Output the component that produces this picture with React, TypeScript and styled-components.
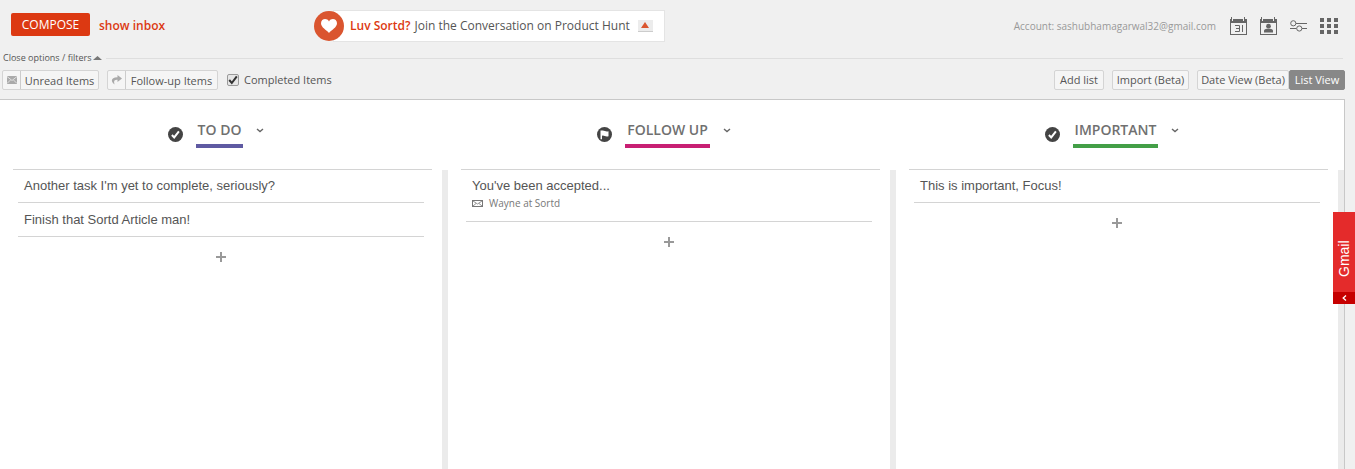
import React from 'react';
import styled, { createGlobalStyle } from 'styled-components';

const ui = `'Segoe UI', 'Open Sans', 'Noto Sans', sans-serif`;

const GlobalStyle = createGlobalStyle`
  *, *::before, *::after { box-sizing: border-box; }
  body {
    margin: 0;
    background: #f0f0f0;
    color: #555;
    font-family: ${ui};
    font-size: 11px;
    line-height: 16px;
  }
  button, input { font: inherit; color: inherit; }
  button { padding: 0; border: 0; background: none; cursor: pointer; white-space: nowrap; }
  svg { display: block; flex: none; }
`;

const Page = styled.div`
  display: flex;
  flex-direction: column;
  min-height: 100vh;
`;

const TopBar = styled.header`
  display: flex;
  align-items: center;
  height: 51px;
  padding: 0 17px 0 11px;
`;

const MailActions = styled.div`
  display: flex;
  align-items: center;
  gap: 9px;
  width: 303px;
`;

const ComposeButton = styled.button`
  width: 79px;
  height: 23px;
  margin-bottom: 2px;
  border-radius: 2px;
  background: #dc3912;
  color: #fff;
  font-size: 12px;
`;

const InboxLink = styled.a`
  color: #dc3912;
  font-size: 12px;
  font-weight: 600;
  text-decoration: none;
`;

const Banner = styled.a`
  display: flex;
  align-items: center;
  height: 32px;
  color: #555;
  font-size: 12px;
  text-decoration: none;
  white-space: nowrap;
`;

const BannerBody = styled.span`
  display: flex;
  align-items: center;
  gap: 4px;
  height: 32px;
  margin-left: -11px;
  padding: 0 11px 0 16px;
  border: 1px solid #e4e4e4;
  background: #fff;
`;

const HeartBadge = styled.span`
  display: grid;
  place-items: center;
  z-index: 1;
  width: 30px;
  height: 30px;
  border-radius: 50%;
  background: #da552f;
`;

const BannerLead = styled.strong`
  color: #dc3912;
  font-weight: 600;
`;

const Upvote = styled.span`
  display: grid;
  place-items: center;
  width: 15px;
  height: 12px;
  margin-left: 4px;
  border-bottom: 1px solid #ccc;
  background: #ececec;
`;

const Account = styled.span`
  margin-left: auto;
  color: #999;
  font-size: 10px;
`;

const ToolIcons = styled.nav`
  display: flex;
  align-items: center;
  gap: 12px;
  margin-left: 14px;
`;

const ToolButton = styled.button`
  width: 18px;
`;

const OptionsLine = styled.div`
  display: flex;
  align-items: center;
  gap: 4px;
  height: 14px;
  padding: 0 12px 0 3px;
`;

const OptionsToggle = styled.button`
  display: flex;
  align-items: center;
  gap: 2px;
  height: 14px;
  font-size: 9px;
`;

const Divider = styled.hr`
  flex: 1;
  height: 1px;
  margin: 0;
  border: 0;
  background: #dedede;
`;

const FilterBar = styled.div`
  display: flex;
  align-items: center;
  justify-content: space-between;
  padding: 5px 10px 9px 2px;
`;

const Group = styled.div<{ $gap: number }>`
  display: flex;
  align-items: center;
  gap: ${({ $gap }) => $gap}px;
`;

const FilterButton = styled.button<{ $width: number }>`
  display: flex;
  width: ${({ $width }) => $width}px;
  height: 20px;
  border: 1px solid #d4d4d4;
  border-radius: 2px;
  background: #f5f5f5;
`;

const FilterIcon = styled.span`
  display: grid;
  place-items: center;
  width: 18px;
  height: 18px;
  border-right: 1px solid #ccc;
`;

const FilterText = styled.span`
  flex: 1;
  line-height: 20px;
`;

const CheckLabel = styled.label`
  display: flex;
  align-items: center;
  gap: 5px;
  margin-left: 1px;
`;

const CheckBox = styled.input`
  appearance: none;
  width: 12px;
  height: 12px;
  margin: 0;
  border: 1px solid #9a9a9a;
  border-radius: 2px;
  background: #e6e6e6;
`;

const CheckFrame = styled.span`
  display: grid;
  > * { grid-area: 1 / 1; place-self: center; pointer-events: none; }
  > input { pointer-events: auto; }
  > input:not(:checked) + svg { visibility: hidden; }
`;

const PlainButton = styled.button<{ $width: number; $active?: boolean }>`
  width: ${({ $width }) => $width}px;
  height: 20px;
  border: 1px solid ${({ $active }) => ($active ? '#888' : '#d4d4d4')};
  border-radius: 2px;
  background: ${({ $active }) => ($active ? '#888' : '#f5f5f5')};
  color: ${({ $active }) => ($active ? '#fff' : '#555')};
`;

const Board = styled.main`
  flex: 1;
  display: grid;
  grid-template-columns: repeat(3, minmax(0, 1fr));
  margin-right: 10px;
  border: 1px solid #c8c8c8;
  border-width: 1px 1px 0 0;
  background: #fff;
`;

const Column = styled.section`
  display: flex;
  flex-direction: column;
`;

const ColumnHead = styled.div`
  display: flex;
  align-items: center;
  justify-content: center;
  gap: 13px;
  height: 70px;
  margin: 0 16px 0 13px;
  padding: 0 13px 1px 0;
  border-bottom: 1px solid #d4d4d4;
`;

const ColumnTitle = styled.h2<{ $color: string }>`
  margin: 0;
  padding: 0 2px 4px;
  border-bottom: 4px solid ${({ $color }) => $color};
  color: #707070;
  font-size: 14px;
  line-height: 20px;
  font-weight: 600;
`;

const MenuButton = styled.button`
  margin-bottom: 8px;
`;

const ColumnBody = styled.div`
  flex: 1;
  padding: 0 18px;
  border-right: 6px solid #ebebeb;
`;

const TaskList = styled.ul`
  margin: -1px 0 0;
  padding: 0;
  list-style: none;
`;

const Task = styled.li`
  padding: 8px 6px;
  border-bottom: 1px solid #d4d4d4;
  font-family: Arial, 'Liberation Sans', sans-serif;
  font-size: 13px;
  line-height: 17px;
`;

const Sender = styled.div`
  display: flex;
  align-items: center;
  gap: 6px;
  padding: 2px 0 3px;
  color: #777;
  font-family: ${ui};
  font-size: 10px;
  line-height: 14px;
`;

const AddTask = styled.button`
  display: block;
  margin: 15px auto 0;
`;

const GmailTab = styled.button`
  position: fixed;
  top: 212px;
  right: 0;
  display: flex;
  flex-direction: column;
  width: 22px;
  height: 92px;
  background: #e42b2b;
  color: #fff;
`;

const GmailText = styled.span`
  flex: 1;
  width: 22px;
  padding-top: 15px;
  writing-mode: vertical-rl;
  transform: rotate(180deg);
  text-align: left;
  font-family: Arial, 'Liberation Sans', sans-serif;
  font-size: 14px;
  line-height: 22px;
`;

const GmailArrow = styled.span`
  display: grid;
  place-items: center;
  width: 22px;
  height: 12px;
  background: #c60000;
`;

const CalendarFrame = () => (
  <path d="M0 2h1V0h1v4h1V2h10v2h1V0h1v2h2v16H0zM1 6v11h15V6z" fill="#666" fillRule="evenodd" />
);

const CalendarIcon = () => (
  <svg width="17" height="18" viewBox="0 0 17 18">
    <CalendarFrame />
    <path d="M5 8.500h4.500v6H5M6 11.500h3.500M12.500 8v7" fill="none" stroke="#666" />
  </svg>
);

const ContactsIcon = () => (
  <svg width="17" height="18" viewBox="0 0 17 18">
    <CalendarFrame />
    <circle cx="8.500" cy="9.200" r="2.400" fill="#666" />
    <path d="M4 15.500v-1.500q0-2 3-2.200h3q3 .2 3 2.200v1.500z" fill="#666" />
  </svg>
);

const SettingsIcon = () => (
  <svg width="18" height="12" viewBox="0 0 18 12" fill="none" stroke="#666">
    <path d="M6 3.500h11M0 8.500h6.500M12 8.500h5" />
    <circle cx="3.300" cy="3.300" r="2.600" />
    <circle cx="9.300" cy="8.500" r="2.600" />
  </svg>
);

const AppsIcon = () => (
  <svg width="18" height="16" viewBox="0 0 18 16" fill="#666">
    {[0, 6, 12].map((y) =>
      [0, 7, 14].map((x) => <rect key={`${x}-${y}`} x={x} y={y} width="4" height="4" />),
    )}
  </svg>
);

const CheckCircle = () => (
  <svg width="15" height="15" viewBox="0 0 15 15">
    <circle cx="7.500" cy="7.500" r="7.500" fill="#444" />
    <path d="M3.900 8l2.300 2.400 4.700-6" fill="none" stroke="#fff" strokeWidth="2" />
  </svg>
);

const FlagCircle = () => (
  <svg width="15" height="15" viewBox="0 0 15 15">
    <circle cx="7.500" cy="7.500" r="7.500" fill="#444" />
    <path d="M3.500 3.500h1.200q1.700-.4 3.200.5 1.700.7 3.600.2v5q-2 .6-3.800-.2-1.500-.7-2.700-.3v3.500H3.500z" fill="#fff" />
  </svg>
);

const Triangle = ({ width, height, color }: { width: number; height: number; color: string }) => (
  <svg width={width} height={height} viewBox="0 0 10 6" preserveAspectRatio="none">
    <path d="M5 0l5 6H0z" fill={color} />
  </svg>
);

type ColumnData = {
  title: string;
  color: string;
  icon: React.ReactNode;
  tasks: { text: string; sender?: string }[];
};

const columns: ColumnData[] = [
  {
    title: 'TO DO',
    color: '#5f5aa2',
    icon: <CheckCircle />,
    tasks: [{ text: "Another task I'm yet to complete, seriously?" }, { text: 'Finish that Sortd Article man!' }],
  },
  {
    title: 'FOLLOW UP',
    color: '#c81f73',
    icon: <FlagCircle />,
    tasks: [{ text: "You've been accepted...", sender: 'Wayne at Sortd' }],
  },
  {
    title: 'IMPORTANT',
    color: '#439f47',
    icon: <CheckCircle />,
    tasks: [{ text: 'This is important, Focus!' }],
  },
];

export default function App() {
  return (
    <Page>
      <GlobalStyle />
      <TopBar>
        <MailActions>
          <ComposeButton>COMPOSE</ComposeButton>
          <InboxLink href="#inbox">show inbox</InboxLink>
        </MailActions>
        <Banner href="#product-hunt">
          <HeartBadge>
            <svg width="16" height="14" viewBox="0 0 16 14">
              <path d="M8 14C5.500 11 0 8.500 0 4.300 0-.4 6-1.400 8 2.500 10-1.400 16-.4 16 4.300 16 8.500 10.500 11 8 14z" fill="#fff" />
            </svg>
          </HeartBadge>
          <BannerBody>
            <BannerLead>Luv Sortd?</BannerLead>
            <span>Join the Conversation on Product Hunt</span>
            <Upvote>
              <Triangle width={8} height={6} color="#da552f" />
            </Upvote>
          </BannerBody>
        </Banner>
        <Account>Account: sashubhamagarwal32@gmail.com</Account>
        <ToolIcons>
          <ToolButton aria-label="Calendar"><CalendarIcon /></ToolButton>
          <ToolButton aria-label="Contacts"><ContactsIcon /></ToolButton>
          <ToolButton aria-label="Settings"><SettingsIcon /></ToolButton>
          <ToolButton aria-label="Apps"><AppsIcon /></ToolButton>
        </ToolIcons>
      </TopBar>
      <OptionsLine>
        <OptionsToggle>
          Close options / filters
          <Triangle width={9} height={4} color="#777" />
        </OptionsToggle>
        <Divider />
      </OptionsLine>
      <FilterBar>
        <Group $gap={8}>
          <FilterButton $width={97}>
            <FilterIcon>
              <svg width="10" height="8" viewBox="0 0 10 8">
                <rect width="10" height="8" fill="#aaa" />
                <path d="M0 .5l5 4 5-4M0 7.500L3.500 4M10 7.500L6.500 4" fill="none" stroke="#eee" strokeWidth=".8" />
              </svg>
            </FilterIcon>
            <FilterText>Unread Items</FilterText>
          </FilterButton>
          <FilterButton $width={111}>
            <FilterIcon>
              <svg width="11" height="10" viewBox="0 0 11 10">
                <path d="M6.500 0L11 3.500 6.500 7V4.800C3.500 4.600 2.300 6 3.600 9.500-.6 6.500-.2 2.300 6.500 2.200z" fill="#aaa" />
              </svg>
            </FilterIcon>
            <FilterText>Follow-up Items</FilterText>
          </FilterButton>
          <CheckLabel>
            <CheckFrame>
              <CheckBox type="checkbox" defaultChecked />
              <svg width="10" height="10" viewBox="0 0 10 10">
                <path d="M1.200 5l2.600 3L8.800 1.300" fill="none" stroke="#333" strokeWidth="2" />
              </svg>
            </CheckFrame>
            Completed Items
          </CheckLabel>
        </Group>
        <Group $gap={8}>
          <PlainButton $width={50}>Add list</PlainButton>
          <PlainButton $width={77}>Import (Beta)</PlainButton>
          <Group $gap={0}>
            <PlainButton $width={92}>Date View (Beta)</PlainButton>
            <PlainButton $width={56} $active>List View</PlainButton>
          </Group>
        </Group>
      </FilterBar>
      <Board>
        {columns.map((column) => (
          <Column key={column.title}>
            <ColumnHead>
              {column.icon}
              <ColumnTitle $color={column.color}>{column.title}</ColumnTitle>
              <MenuButton aria-label={`${column.title} menu`}>
                <svg width="8" height="5" viewBox="0 0 8 5">
                  <path d="M1 1l3 2.500L7 1" fill="none" stroke="#666" strokeWidth="1.400" />
                </svg>
              </MenuButton>
            </ColumnHead>
            <ColumnBody>
              <TaskList>
                {column.tasks.map((task) => (
                  <Task key={task.text}>
                    {task.text}
                    {task.sender && (
                      <Sender>
                        <svg width="11" height="7" viewBox="0 0 11 7" fill="none" stroke="#777">
                          <rect x=".5" y=".5" width="10" height="6" />
                          <path d="M1 1l4.500 3L10 1M1 6l3-2.500M10 6L7 3.500" strokeWidth=".8" />
                        </svg>
                        {task.sender}
                      </Sender>
                    )}
                  </Task>
                ))}
              </TaskList>
              <AddTask aria-label="Add task">
                <svg width="10" height="10" viewBox="0 0 10 10">
                  <path d="M5 0v10M0 5h10" stroke="#999" strokeWidth="2" />
                </svg>
              </AddTask>
            </ColumnBody>
          </Column>
        ))}
      </Board>
      <GmailTab>
        <GmailText>Gmail</GmailText>
        <GmailArrow>
          <svg width="5" height="6" viewBox="0 0 5 6">
            <path d="M4 .5L1.200 3 4 5.500" fill="none" stroke="#fff" strokeWidth="1.300" />
          </svg>
        </GmailArrow>
      </GmailTab>
    </Page>
  );
}
